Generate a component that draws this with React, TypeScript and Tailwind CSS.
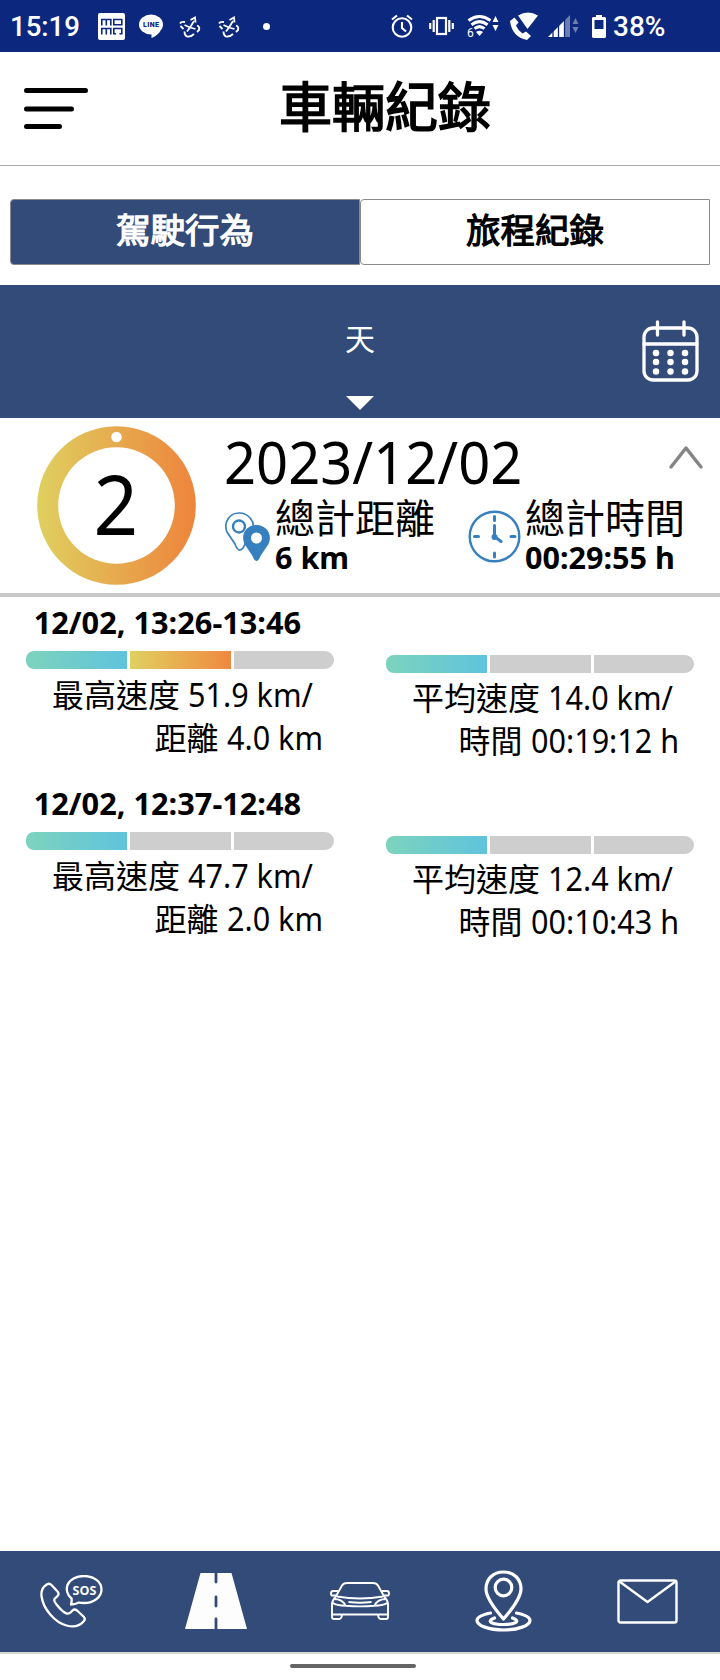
import type { ReactNode } from 'react';

type Tone = 'teal' | 'amber' | 'none';

interface Trip {
  period: string;
  maxSpeed: string;
  avgSpeed: string;
  distance: string;
  duration: string;
  maxBars: Tone[];
  avgBars: Tone[];
}

const trips: Trip[] = [
  {
    period: '12/02, 13:26-13:46',
    maxSpeed: '51.9 km/',
    avgSpeed: '14.0 km/',
    distance: '4.0 km',
    duration: '00:19:12 h',
    maxBars: ['teal', 'amber', 'none'],
    avgBars: ['teal', 'none', 'none'],
  },
  {
    period: '12/02, 12:37-12:48',
    maxSpeed: '47.7 km/',
    avgSpeed: '12.4 km/',
    distance: '2.0 km',
    duration: '00:10:43 h',
    maxBars: ['teal', 'none', 'none'],
    avgBars: ['teal', 'none', 'none'],
  },
];

const tones: Record<Tone, string> = {
  teal: 'bg-linear-to-r from-[#7dd3bd] to-[#5fc3dc]',
  amber: 'bg-linear-to-r from-[#dfd060] to-[#ee883f]',
  none: 'bg-[#cecece]',
};

const FanIcon = () => (
  <svg className="h-[22px] w-[22px]" viewBox="0 0 22 22" fill="none" stroke="#fff" strokeWidth="1.8">
    <path d="M11 11.500L5.500 9M11 11.500l4-6.500M11 11.500l5.500 1.500M11 11.500l-3 4" />
    <path d="M1 7.500Q2 5.500 6 6M1.500 10l3 3M11.500 4l4.500-2.500.500 5M18 9.500q3 1 2 4.500l-2 2M5.500 15.500q0 4 2.500 5 4 .500 7-2.500" />
  </svg>
);

const StatusBar = () => (
  <header className="flex h-[52px] items-center bg-[#0c287e] pb-px text-white font-[Roboto,sans-serif]">
    <span className="ml-[10px] w-[88px] origin-left scale-x-[0.985] pt-[3px] text-[28px] leading-none font-medium">15:19</span>
    <svg className="mt-px h-[27px] w-[27px]" viewBox="0 0 27 27" fill="none" stroke="#0c287e" strokeWidth="1.600">
      <rect width="27" height="27" rx="2" fill="#fff" stroke="none" />
      <path d="M3.800 12.500V6.500h9v6M8.300 6.500v6M15.800 6.500h8v5.200h-8zM3.800 21.500v-6h9v6M8.300 15.500v6M18 20.700h-2.200v-5.200h8v5.200h-2.300" />
    </svg>
    <svg className="mt-px ml-[14px] h-[24px] w-[24px] overflow-visible" viewBox="0 0 24 24">
      <ellipse cx="12" cy="10.500" rx="12" ry="10" fill="#fff" />
      <path d="M7 19l5.500 1v4q6-2.500 9-7z" fill="#fff" />
      <text x="12" y="13" textAnchor="middle" textLength="16" fontSize="7" fontWeight="900" fontFamily="Roboto, sans-serif" fill="#0c287e">LINE</text>
    </svg>
    <div className="mt-[2px] ml-[16px] flex gap-[17px]">
      <FanIcon />
      <FanIcon />
    </div>
    <span className="mt-[2px] ml-[23px] h-[7px] w-[7px] rounded-full bg-white" />
    <svg className="mt-px ml-[121px] h-[24px] w-[22px]" viewBox="0 0 22 24" fill="none" stroke="#fff" strokeWidth="2.100">
      <circle cx="11" cy="13.500" r="9.300" />
      <path d="M11 8v6l4 3.500M1 5.500l5-4M21 5.500l-5-4" />
    </svg>
    <svg className="mt-px ml-[16px] h-[20px] w-[25px]" viewBox="0 0 25 20" fill="none" stroke="#fff" strokeWidth="2.200">
      <rect x="8" y="2" width="9" height="16" />
      <path d="M4.700 4v12M20.300 4v12M1.200 7v6M23.800 7v6" />
    </svg>
    <svg className="mt-px ml-[13px] h-[24px] w-[33px] overflow-visible" viewBox="0 0 33 24" fill="none" stroke="#fff" strokeWidth="3">
      <path d="M1.500 6.500Q12.500-1.500 23.500 6.500M4.500 10.700Q12.500 4.500 20.500 10.700M7.500 14.700Q12.500 10.500 17.500 14.700" />
      <path d="M9 18q3.500-2.500 7 0l-3.500 4z" fill="#fff" stroke="none" />
      <path d="M25.500 8l3-6 3 6zM25.500 11l3 6 3-6z" fill="#fff" stroke="none" />
      <text x="0" y="23" fontSize="12" stroke="#0c287e" strokeWidth="3" paintOrder="stroke" fill="#fff" fontFamily="Roboto, sans-serif">6</text>
    </svg>
    <svg className="ml-[9px] h-[28px] w-[29px]" viewBox="0 0 29 28" fill="#fff">
      <path d="M9 3.500Q19-2.500 29 3.500L18.500 17z" />
      <path d="M1 9l4.500-3.500 4 5-2.500 3q2 5 6.500 8l3.500-2 5 4.500-4 4Q3 25 1 9z" />
    </svg>
    <svg className="mt-px ml-[10px] h-[23px] w-[31px]" viewBox="0 0 31 23" fill="#fff">
      <path d="M0 22L16 6v16z" />
      <path d="M17 5l5-5v22h-5z" opacity=".4" />
      <path d="M24.500 9l3-6 3 6zM24.500 12l3 6 3-6z" opacity=".4" />
      <path d="M5 12v10M10.500 8v14M16.500 2v20" stroke="#0c287e" strokeWidth="1.300" />
    </svg>
    <svg className="mt-px ml-[13px] h-[23px] w-[14px]" viewBox="0 0 14 23" fill="#fff">
      <path d="M4 0h6v3H4z" />
      <path fillRule="evenodd" d="M1 2h12l1 1v19l-1 1H1l-1-1V3zM2.500 5v9h9V5z" />
    </svg>
    <span className="ml-[7px] pt-[3px] text-[28px] leading-none font-medium">38%</span>
  </header>
);

const Bars = ({ items }: { items: Tone[] }) => (
  <div className="flex h-[18px] w-[308px] gap-[3px]">
    {items.map((tone, i) => (
      <div key={i} className={`flex-1 first:mr-[0.500px] first:rounded-l-[8px] last:rounded-r-[9px] ${tones[tone]}`} />
    ))}
  </div>
);

const Line = ({ label, value, className }: { label: string; value: string; className: string }) => (
  <p className={`flex h-[43px] items-center text-[32px] whitespace-pre ${className}`}>
    <span>{label}</span>
    <span className="ml-2 origin-left scale-x-[0.955]">{value}</span>
  </p>
);

const TripRow = ({ trip }: { trip: Trip }) => (
  <section className="grid h-[181px] grid-cols-2">
    <div className="pt-[5.500px]">
      <h3 className="h-[48.500px] origin-left scale-x-[0.991] pl-[34px] text-[31px] leading-[38px] font-bold">{trip.period}</h3>
      <div className="pl-[26px]">
        <Bars items={trip.maxBars} />
      </div>
      <Line label="最高速度" value={trip.maxSpeed} className="mt-[4px] pl-[52px]" />
      <Line label="距離" value={trip.distance} className="mt-[0.500px] pl-[154.500px]" />
    </div>
    <div className="pt-[58px] pl-[26px]">
      <Bars items={trip.avgBars} />
      <Line label="平均速度" value={trip.avgSpeed} className="mt-[3px] pl-[26px]" />
      <Line label="時間" value={trip.duration} className="mt-[0.500px] pl-[72.500px]" />
    </div>
  </section>
);

const Total = ({ icon, label, value, className }: { icon: ReactNode; label: string; value: string; className: string }) => (
  <div className={`flex ${className}`}>
    {icon}
    <div>
      <p className="h-[41.500px] text-[40px] leading-[41px]">{label}</p>
      <p className="origin-left scale-x-[0.985] text-[31px] leading-[36px] font-bold whitespace-nowrap">{value}</p>
    </div>
  </div>
);

const Summary = () => (
  <section className="flex h-[179px] border-b-4 border-[#c9c9c9]">
    <svg className="mt-[8px] ml-[37px] h-[160px] w-[160px] shrink-0" viewBox="0 0 160 160">
      <defs>
        <linearGradient id="ring">
          <stop stopColor="#dfd060" />
          <stop offset="1" stopColor="#ee843c" />
        </linearGradient>
      </defs>
      <circle cx="79.500" cy="79.500" r="79.300" fill="url(#ring)" />
      <circle cx="79.500" cy="79.500" r="58.300" fill="#fff" />
      <circle cx="79.500" cy="11" r="5.300" fill="#fff" />
      <text transform="translate(78.800 109) scale(.94 1)" textAnchor="middle" fontSize="83" fontFamily="Noto Sans, sans-serif">2</text>
    </svg>
    <div className="ml-[27px] flex-1 pt-[11px]">
      <div className="flex h-[68px] justify-between">
        <h2 className="origin-left scale-x-[0.967] text-[58px] leading-[65px]">2023/12/02</h2>
        <svg className="mt-[15px] mr-[16px] h-[26px] w-[36px]" viewBox="0 0 36 26" fill="none" stroke="#858585" strokeWidth="3.500" strokeLinecap="round" strokeLinejoin="round">
          <path d="M3 23L18 4l15 19" />
        </svg>
      </div>
      <div className="flex">
        <Total
          className="w-[244px]"
          label="總計距離"
          value="6 km"
          icon={
            <svg className="mt-[14px] mr-[5px] h-[50px] w-[46px]" viewBox="0 0 46 50" fill="none" stroke="#3780bf" strokeWidth="1.700">
              <path d="M15 39Q13 38 11 33L3 21C-1 11 6 2 15 2s17 8 13.500 18L19 37q-2 2.500-4 2z" />
              <circle cx="15" cy="15.500" r="6" strokeWidth="2.400" />
              <path d="M32.500 50q-2 0-4-5l-8-12C16 23 23 14 32.500 14S49 23 44.500 33l-8 12q-2 5-4 5z" fill="#3780bf" stroke="none" />
              <circle cx="32.500" cy="27" r="5.500" fill="#fff" stroke="none" />
            </svg>
          }
        />
        <Total
          className=""
          label="總計時間"
          value="00:29:55 h"
          icon={
            <svg className="mt-[13px] mr-[4px] h-[53px] w-[53px]" viewBox="0 0 53 53" fill="none" stroke="#3780bf" strokeWidth="3" strokeLinecap="round">
              <circle cx="26.500" cy="26.500" r="24.800" strokeWidth="2.400" />
              <path d="M26.500 6.500v4M26.500 43v4M6.500 26.500h4M43 26.500h4M26.500 15.500v11l6.500 5" />
              <circle cx="26.500" cy="27" r="1.500" />
            </svg>
          }
        />
      </div>
    </div>
  </section>
);

const CarIcon = () => (
  <svg className="-mt-[2px] h-[38px] w-[60px]" viewBox="0 0 60 38" fill="none" stroke="#fff" strokeWidth="1.900" strokeLinejoin="round">
    <path d="M5.500 15L12 3.500Q13.500 1 17 1h26q3.500 0 5 2.500L54.500 15M7 14.500q23 4 46 0" />
    <path d="M8 9H3Q1 9 1 11.500T3 13.500h3M52 9h5q2 0 2 2.500t-2 2h-3" />
    <path d="M5.500 15Q2 19 2 22v13q0 2 2 2h5.500q2 0 2.500-4M54.500 15q3.500 4 3.500 7v13q0 2-2 2h-5.500q-2 0-2.500-4M2 32.500h56" />
    <path d="M3.500 17q9 0 12 6.500M56.500 17q-9 0-12 6.500M3 21q3 2.500 13 2.800 14 1.200 28 0 10-.300 13-2.800M18.500 20q11.500 1.500 23 0" />
  </svg>
);

const BottomNav = () => (
  <nav className="flex h-[103px] items-center border-b-2 border-[#d6d6d6] bg-[#334b78]">
    <svg className="ml-[40px] h-[54px] w-[63px]" viewBox="0 0 63 54" fill="none" stroke="#fff" strokeWidth="2.300" strokeLinejoin="round">
      <path d="M6 10q3-2.500 5.500 0l6 6.500q2 2.500 0 4.500l-3 3q-1 2 2 5.500 6 7.500 10 9 2.500.5 4-1l2-2q2-2 4.500 0l6.500 6q2.500 2.500 0 5-6 7-17 4C15 47.500 3 34 1.500 21 1 16 3 12 6 10z" />
      <path d="M31 29.500q1-3 .5-6C27 20 26 14 27.500 10 30 4 37 1 44 1c10 0 17.500 6 17.500 13.500S54 28 44 28q-3 0-5-.5-4 2-8 2z" />
      <text x="44.500" y="19.500" textAnchor="middle" textLength="24" fontSize="12.500" fontWeight="700" fontFamily="Open Sans, sans-serif" fill="#fff" stroke="none">SOS</text>
    </svg>
    <svg className="-mt-px ml-[82px] h-[56px] w-[62px]" viewBox="0 0 62 56">
      <path d="M15.500 0h31L62 56H0z" fill="#fdfdfd" />
      <path d="M31 0v9M31 24v9M31 46v10" stroke="#334b78" strokeWidth="2.800" strokeLinecap="round" />
    </svg>
    <div className="ml-[83px]">
      <CarIcon />
    </div>
    <svg className="-mt-[2px] ml-[85px] h-[62px] w-[57px]" viewBox="0 0 57 62" fill="none" stroke="#fff" strokeWidth="3.200" strokeLinecap="round" strokeLinejoin="round">
      <path d="M28.500 49Q11 29 11 19C11 9 18 2 28.500 2S46 9 46 19q0 10-17.500 30z" />
      <circle cx="28.500" cy="17.500" r="8.300" />
      <path d="M15.500 43C8 44.500 2 47 2 50.500c0 5 12 9.500 26.500 9.500S55 55.500 55 50.500c0-3.500-6-6-13.500-7.500" />
      <path d="M19.500 48C10 51.500 18 54.500 28.500 54.500s18.500-3 9-6.500" />
    </svg>
    <svg className="ml-[85px] h-[45px] w-[61px]" viewBox="0 0 61 45" fill="none" stroke="#fff" strokeWidth="2.400" strokeLinejoin="round">
      <rect x="1.500" y="1.500" width="58" height="42" rx="2" />
      <path d="M2.500 2.500l28 20.500 28-20.500" />
    </svg>
  </nav>
);

export default function App() {
  return (
    <div className="flex h-[1680px] w-[720px] flex-col overflow-hidden bg-white text-black font-['Noto_Sans','Noto_Sans_CJK_TC',sans-serif]">
      <StatusBar />
      <div className="flex h-[114px] items-center border-b border-[#aaa] bg-white">
        <svg className="ml-[24px] h-[42px] w-[64px]" viewBox="0 0 64 42" stroke="#000" strokeWidth="5" strokeLinecap="round">
          <path d="M2.500 2.500h59M2.500 21h45M2.500 38.500h33" />
        </svg>
        <h1 className="-mt-[4px] ml-[191px] text-[53px] leading-none whitespace-nowrap [-webkit-text-stroke:1.7px]">車輛紀錄</h1>
      </div>
      <div className="mx-[10px] mt-[33px] mb-[20px] flex h-[66px] text-[34.500px] [-webkit-text-stroke:1.2px]">
        <button className="flex-1 rounded-l-[4px] border border-[#8a8a8a] bg-[#334b78] pb-[4px] text-white">駕駛行為</button>
        <button className="flex-1 rounded-l-[4px] border border-[#8a8a8a] bg-white pb-[4px]">旅程紀錄</button>
      </div>
      <div className="grid h-[133px] grid-cols-3 bg-[#334b78]">
        <div className="col-start-2 flex flex-col items-center pt-[36px] text-white">
          <span className="h-[75px] text-[30px] leading-[36px]">天</span>
          <svg className="h-[14px] w-[28px]" viewBox="0 0 28 14">
            <path d="M0 0h28L14 14z" fill="#fff" />
          </svg>
        </div>
        <svg className="mt-[34px] mr-[21px] h-[63px] w-[57px] justify-self-end" viewBox="0 0 57 63" fill="none" stroke="#fff" strokeWidth="3.300" strokeLinecap="round">
          <rect x="2" y="9" width="53" height="52" rx="9" />
          <path d="M2 25h53M15.500 3v13M42 3v13" />
          <path d="M14 34h.01M28.500 34h.01M43 34h.01M14 43h.01M28.500 43h.01M43 43h.01M14 52.500h.01M28.500 52.500h.01M43 52.500h.01" strokeWidth="6.500" />
        </svg>
      </div>
      <Summary />
      <main className="flex-1">
        {trips.map((trip) => (
          <TripRow key={trip.period} trip={trip} />
        ))}
      </main>
      <BottomNav />
      <footer className="flex h-[26px] justify-center bg-white">
        <div className="mt-[10px] mr-[14px] h-[4px] w-[126px] rounded-full bg-[#646464]" />
      </footer>
    </div>
  );
}
